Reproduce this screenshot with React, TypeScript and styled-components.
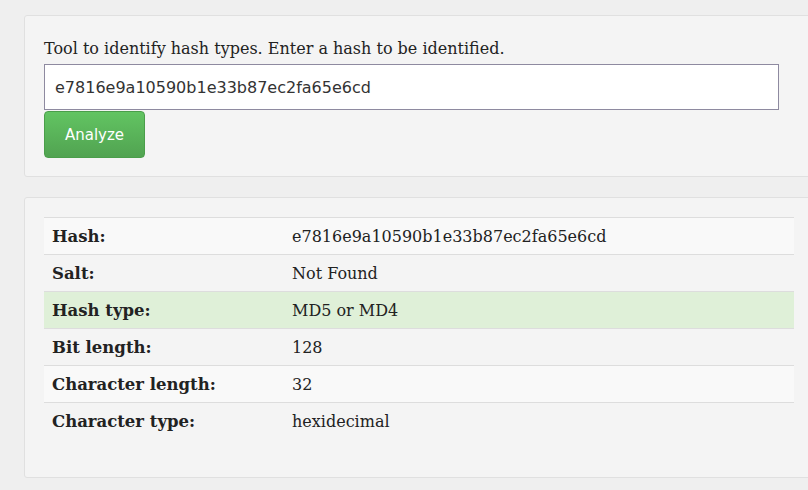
import React from "react";
import styled, { createGlobalStyle } from "styled-components";

const rows = [
  { label: "Hash:", value: "e7816e9a10590b1e33b87ec2fa65e6cd", tone: "odd" },
  { label: "Salt:", value: "Not Found", tone: "even" },
  { label: "Hash type:", value: "MD5 or MD4", tone: "success" },
  { label: "Bit length:", value: "128", tone: "even" },
  { label: "Character length:", value: "32", tone: "odd" },
  { label: "Character type:", value: "hexidecimal", tone: "even" },
];

const App = () => {
  return (
    <>
      <Global />
      <Page>
        <Panel>
          <Intro>Tool to identify hash types. Enter a hash to be identified.</Intro>
          <HashInput defaultValue="e7816e9a10590b1e33b87ec2fa65e6cd" />
          <Analyze>Analyze</Analyze>
        </Panel>

        <ResultPanel>
          <Table>
            <tbody>
              {rows.map((r) => (
                <Row key={r.label} tone={r.tone}>
                  <Label>{r.label}</Label>
                  <Value>{r.value}</Value>
                </Row>
              ))}
            </tbody>
          </Table>
        </ResultPanel>
      </Page>
    </>
  );
};

export default App;

const Global = createGlobalStyle`
body {
  margin: 0;
  background-color: #efefef;
  font-family: "DejaVu Serif", Georgia, serif;
  color: #222;
}
`;

const Page = styled.div`
  width: 808px;
  height: 490px;
  overflow: hidden;
  padding: 15px 0 0 24px;
  box-sizing: border-box;
  display: flex;
  flex-direction: column;
  gap: 20px;
`;

const Panel = styled.div`
  width: 820px;
  height: 162px;
  box-sizing: border-box;
  background-color: #f4f4f4;
  border: 1px solid #e0e0e0;
  border-radius: 3px;
  padding: 22px 19px 0 19px;
  display: flex;
  flex-direction: column;
  align-items: flex-start;
`;

const ResultPanel = styled(Panel)`
  height: 281px;
  padding: 19px 19px 0 19px;
`;

const Intro = styled.div`
  font-size: 16px;
  line-height: 21px;
  margin-bottom: 5px;
`;

const HashInput = styled.input`
  width: 735px;
  height: 46px;
  box-sizing: border-box;
  border: 1px solid #8e8aa0;
  background: #fff;
  padding: 0 10px;
  font-family: "DejaVu Sans", Verdana, sans-serif;
  font-size: 16px;
  color: #333;
  outline: none;
`;

const Analyze = styled.button`
  margin-top: 1px;
  width: 101px;
  height: 47px;
  border: 1px solid #4a9e4a;
  border-radius: 4px;
  background: linear-gradient(#62c462, #51a351);
  color: #fff;
  font-family: "DejaVu Sans", Tahoma, sans-serif;
  font-size: 15px;
  cursor: pointer;
`;

const Table = styled.table`
  width: 750px;
  border-collapse: collapse;
`;

const Row = styled.tr<{ tone: string }>`
  height: 37px;
  background-color: ${(p) =>
    p.tone === "success" ? "#dff0d8" : p.tone === "odd" ? "#f9f9f9" : "#f4f4f4"};
  border-top: 1px solid #dddddd;
`;

const Label = styled.td`
  width: 224px;
  padding: 0 8px;
  font-weight: bold;
  font-size: 16.5px;
`;

const Value = styled.td`
  padding: 0 8px;
  font-size: 16px;
`;
